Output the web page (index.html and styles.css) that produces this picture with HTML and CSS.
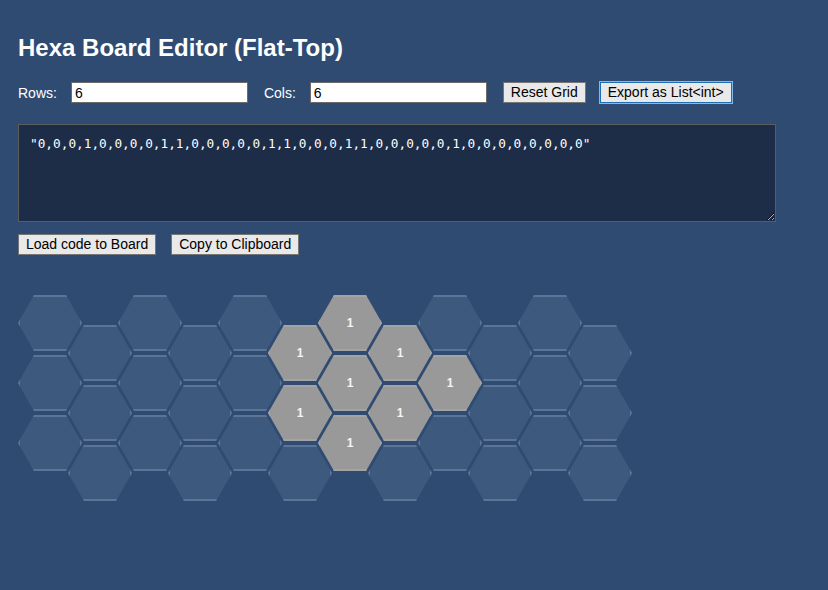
FILE: index.html
```html
<!DOCTYPE html>
<html>
<head>
<meta charset="utf-8">
<title>Hexa Board Editor</title>
<link rel="stylesheet" href="styles.css">
</head>
<body>
<h1 class="title">Hexa Board Editor (Flat-Top)</h1>
<div class="controls">
  <label class="lbl" for="rows">Rows:</label>
  <input class="num" id="rows" type="text" value="6">
  <label class="lbl" for="cols">Cols:</label>
  <input class="num" id="cols" type="text" value="6">
  <button class="btn">Reset Grid</button>
  <button class="btn btn-focus">Export as List&lt;int&gt;</button>
</div>
<textarea class="code" spellcheck="false">"0,0,0,1,0,0,0,0,1,1,0,0,0,0,0,1,1,0,0,0,1,1,0,0,0,0,0,1,0,0,0,0,0,0,0,0"</textarea>
<div class="actions">
  <button class="btn">Load code to Board</button>
  <button class="btn">Copy to Clipboard</button>
</div>
<div class="board">
  <div class="col"><div class="hex"></div><div class="hex"></div><div class="hex"></div></div>
  <div class="col odd"><div class="hex"></div><div class="hex"></div><div class="hex"></div></div>
  <div class="col"><div class="hex"></div><div class="hex"></div><div class="hex"></div></div>
  <div class="col odd"><div class="hex"></div><div class="hex"></div><div class="hex"></div></div>
  <div class="col"><div class="hex"></div><div class="hex"></div><div class="hex"></div></div>
  <div class="col odd"><div class="hex on">1</div><div class="hex on">1</div><div class="hex"></div></div>
  <div class="col"><div class="hex on">1</div><div class="hex on">1</div><div class="hex on">1</div></div>
  <div class="col odd"><div class="hex on">1</div><div class="hex on">1</div><div class="hex"></div></div>
  <div class="col"><div class="hex"></div><div class="hex on">1</div><div class="hex"></div></div>
  <div class="col odd"><div class="hex"></div><div class="hex"></div><div class="hex"></div></div>
  <div class="col"><div class="hex"></div><div class="hex"></div><div class="hex"></div></div>
  <div class="col odd"><div class="hex"></div><div class="hex"></div><div class="hex"></div></div>
</div>
</body>
</html>
```
FILE: styles.css
```css
html, body {
  margin: 0;
  background: #2f4b72;
}
body {
  padding: 18px 18px 0 18px;
  font-family: "Liberation Sans", Arial, sans-serif;
  font-size: 14px;
  color: #ffffff;
}
.title {
  margin: 16px 0 20px 0;
  font-size: 24px;
  line-height: 28px;
  font-weight: bold;
}
.controls {
  display: flex;
  align-items: center;
  height: 21px;
}
.lbl {
  margin-right: 14px;
}
.num {
  box-sizing: border-box;
  width: 177px;
  height: 21px;
  margin: 0 16px 0 0;
  padding: 1px 3px;
  border: 1px solid #6b6b6b;
  border-radius: 0;
  background: #ffffff;
  color: #000;
  font-family: "Liberation Sans", Arial, sans-serif;
  font-size: 14px;
}
.btn {
  box-sizing: border-box;
  height: 21px;
  margin: 0 14px 0 0;
  padding: 0 7px;
  border: 1px solid #767676;
  border-radius: 0;
  background: #e9e9e9;
  color: #000;
  font-family: "Liberation Sans", Arial, sans-serif;
  font-size: 14px;
  line-height: 17px;
}
.btn-focus {
  border-color: #1a6fb7;
  outline: 1px solid #7fbbea;
  outline-offset: 0;
}
.code {
  display: block;
  box-sizing: border-box;
  width: 758px;
  height: 98px;
  margin: 21px 0 0 0;
  padding: 10px 11px;
  border: 1px solid #5c5c5c;
  border-radius: 0;
  background: #1d2d48;
  color: #ffffff;
  font-family: "DejaVu Sans Mono", "Liberation Mono", monospace;
  font-size: 12.75px;
  line-height: 17px;
  resize: both;
}
.actions {
  display: flex;
  margin-top: 12px;
  height: 21px;
}
.actions .btn {
  margin-right: 15px;
}
.board {
  display: flex;
  margin-top: 40px;
}
.col {
  display: flex;
  flex-direction: column;
  gap: 4px;
  width: 64px;
}
.col + .col {
  margin-left: -14px;
}
.col.odd {
  padding-top: 30px;
}
.hex {
  box-sizing: border-box;
  width: 64px;
  height: 56px;
  clip-path: polygon(25% 0, 75% 0, 100% 50%, 75% 100%, 25% 100%, 0 50%);
  background: #3d5a7e;
  border: 2px solid #5b7599;
  display: flex;
  align-items: center;
  justify-content: center;
  font-size: 12px;
  font-weight: bold;
  color: #f4f4f4;
}
.hex.on {
  background: #999999;
  border-color: #a3a3a3;
}
```
